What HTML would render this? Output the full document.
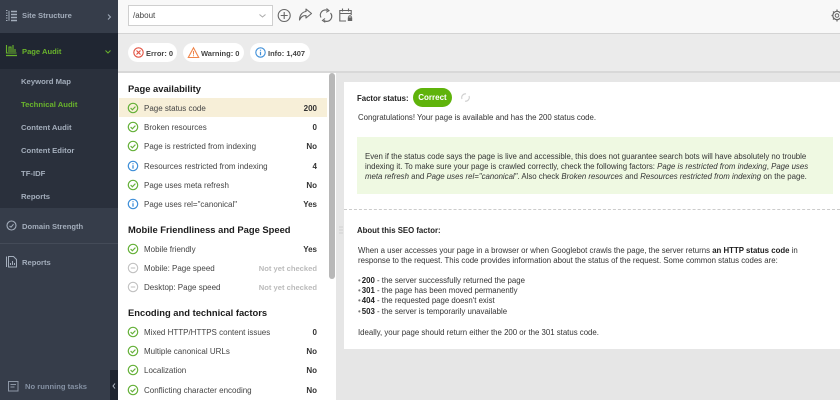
<!DOCTYPE html>
<html><head><meta charset="utf-8"><style>
html,body{margin:0;padding:0;width:840px;height:400px;overflow:hidden;background:#e6e6e6;font-family:"Liberation Sans",Arial,sans-serif}
.a{position:absolute;white-space:nowrap}
svg{position:absolute;overflow:visible}
.n{font-size:7.600px;font-weight:bold;color:#a3adbb;line-height:12px;margin-top:1px}
.s{font-size:7.700px;font-weight:bold;color:#a3adbb;left:21px;line-height:12px;margin-top:1px}
.h{font-size:9.400px;font-weight:bold;color:#1c1c1c;left:128px;line-height:12px}
.r{font-size:8px;color:#444;left:144px;line-height:12px;margin-top:1px}
.v{font-size:8px;font-weight:bold;color:#333;right:523px;line-height:12px;margin-top:1px}
.g{color:#bbb;font-size:7.600px}
.t{font-size:7.840px;color:#333;line-height:10.200px;left:358px}
.p{font-size:7.500px;font-weight:bold;color:#444;line-height:12px;top:48px}
</style></head><body>
<svg width="0" height="0" style="position:absolute"><defs>
<g id="ok"><circle cx="6" cy="6" r="4.700" fill="none" stroke="#66b13a" stroke-width="1.200"/><path d="M3.600 6l1.800 1.800 3-3.200" fill="none" stroke="#66b13a" stroke-width="1.200"/></g>
<g id="in"><circle cx="6" cy="6" r="4.700" fill="none" stroke="#3f8fd8" stroke-width="1.200"/><path d="M6 5.200v3.400M6 3.200v1.100" fill="none" stroke="#3f8fd8" stroke-width="1.300"/></g>
<g id="no"><circle cx="6" cy="6" r="4.700" fill="none" stroke="#c2c2c2" stroke-width="1.100"/><path d="M3.800 6h4.400" fill="none" stroke="#c2c2c2" stroke-width="1.100"/></g>
</defs></svg>

<!-- sidebar -->
<div class="a" style="left:0;top:0;width:118px;height:400px;background:#363d4a"></div>
<div class="a" style="left:0;top:33px;width:118px;height:36px;background:#202632"></div>
<div class="a" style="left:0;top:69px;width:118px;height:139px;background:#2a303c"></div>
<div class="a" style="left:0;top:243px;width:118px;height:1px;background:#444b58"></div>
<svg style="left:6px;top:10px" width="11" height="12"><path d="M0 .5h1.500M0 3h1.500M0 5.500h1.500M0 8h1.500M0 10.500h1.500" stroke="#a3adbb" stroke-width="1"/><path d="M3 .7v10" stroke="#a3adbb"/><path d="M5 1.500h6M5 4.500h6M5 7.500h6M5 10.500h6" stroke="#a3adbb" stroke-width="1.500"/></svg>
<div class="a n" style="left:22px;top:9px">Site Structure</div>
<svg style="left:107px;top:14px" width="5" height="6"><path d="M1 .5L3.500 3 1 5.500" fill="none" stroke="#a3adbb"/></svg>
<svg style="left:6px;top:45px" width="11" height="12"><path d="M.5 0v8h10M3 7V2h2v5M7 7V0M9 7V4" fill="none" stroke="#69b32c" stroke-width="1.100"/><path d="M0 10.500h11" stroke="#69b32c" stroke-width="1.300"/></svg>
<div class="a n" style="left:22px;top:45px;color:#69b32c">Page Audit</div>
<svg style="left:105px;top:50px" width="6" height="4"><path d="M.5 .5L3 3 5.500 .5" fill="none" stroke="#69b32c"/></svg>
<div class="a s" style="top:75px">Keyword Map</div>
<div class="a s" style="top:98px;color:#69b32c">Technical Audit</div>
<div class="a s" style="top:121px">Content Audit</div>
<div class="a s" style="top:144px">Content Editor</div>
<div class="a s" style="top:167px">TF-IDF</div>
<div class="a s" style="top:190px">Reports</div>
<svg style="left:6px;top:220px" width="11" height="11"><circle cx="5.500" cy="5.500" r="4.500" fill="none" stroke="#a3adbb" stroke-width="1.100"/><path d="M3.500 6l1.500 1.200 2.500-3" fill="none" stroke="#a3adbb"/></svg>
<div class="a n" style="left:22px;top:220px">Domain Strength</div>
<svg style="left:6px;top:256px" width="11" height="12"><path d="M.5 .5v10.500" stroke="#a3adbb"/><path d="M2.500 .5h5l3 3v7.500h-8z" fill="none" stroke="#a3adbb"/><path d="M4.500 9V7M6.500 9V5M8.500 9V7" stroke="#a3adbb"/></svg>
<div class="a n" style="left:22px;top:256px">Reports</div>
<svg style="left:8px;top:381px" width="11" height="11"><rect x=".5" y=".5" width="9.500" height="9.500" fill="none" stroke="#8d97a6"/><path d="M2.500 3.500h5.500M2.500 6h4" stroke="#8d97a6"/></svg>
<div class="a n" style="left:25px;top:380px;color:#8591a3">No running tasks</div>
<div class="a" style="left:110px;top:370px;width:8px;height:30px;background:#1f2530"></div>
<svg style="left:112px;top:383px" width="4" height="6"><path d="M3 .5L1 3l2 2.500" fill="none" stroke="#b5bcc7"/></svg>

<!-- top bar -->
<div class="a" style="left:118px;top:0;width:722px;height:33px;background:#f8f8f8;border-bottom:1px solid #d4d4d4"></div>
<div class="a" style="left:128px;top:5px;width:143px;height:19px;background:#fff;border:1px solid #cfcfcf"></div>
<div class="a" style="left:133px;top:10px;font-size:8px;color:#444;line-height:12px">/about</div>
<svg style="left:259px;top:14px" width="7" height="4"><path d="M.5 .5L3.500 3 6.500 .5" fill="none" stroke="#aaa"/></svg>
<svg style="left:277px;top:8px" width="15" height="15"><circle cx="7.200" cy="7.500" r="6" fill="none" stroke="#666" stroke-width="1.100"/><path d="M7.200 4v7M3.700 7.500h7" stroke="#666" stroke-width="1.100"/></svg>
<svg style="left:298px;top:8px" width="15" height="14"><path d="M8 1l5.500 4.500L8 10V7.500C4.500 7.500 3 9 1.500 12 1.500 7.500 4 4 8 3.500z" fill="none" stroke="#666" stroke-width="1.100" stroke-linejoin="round"/></svg>
<svg style="left:319px;top:8px" width="14" height="15"><path d="M2 9.500A5 5 0 0 1 8.500 2.500M11.500 5A5 5 0 0 1 5 12.500" fill="none" stroke="#666" stroke-width="1.200"/><path d="M7.500 .5l2.500 2.200-2.800 1.600M6 10.500l-2.500 2 2.800 1.800" fill="none" stroke="#666" stroke-width="1.100"/></svg>
<svg style="left:339px;top:8px" width="14" height="15"><path d="M7 13H.8V2.500h11.400V7" fill="none" stroke="#666" stroke-width="1.100"/><path d="M1 5.500h11M3.500 .5v3M9.500 .5v3" stroke="#666" stroke-width="1.100"/><rect x="8.800" y="9.500" width="4.400" height="3.500" fill="#666"/><circle cx="11" cy="9" r="1.300" fill="none" stroke="#666"/></svg>
<svg style="left:831px;top:9px" width="12" height="13"><circle cx="6" cy="6.500" r="1.800" fill="none" stroke="#666"/><circle cx="6" cy="6.500" r="4.200" fill="none" stroke="#666" stroke-width="1.200"/><path d="M6 .5v1.500M6 11v1.500M.5 6.500H2M10 6.500h1.500M2 2.500l1.200 1.200M8.800 9.300L10 10.500M2 10.500l1.200-1.200M8.800 3.700L10 2.500" stroke="#666" stroke-width="1.200"/></svg>

<!-- status bar -->
<div class="a" style="left:118px;top:34px;width:722px;height:37px;background:#ebebeb;border-bottom:2px solid #d8d8d8"></div>
<div class="a" style="left:128px;top:43px;width:49px;height:19px;border-radius:10px;background:#fff"></div>
<div class="a" style="left:183px;top:43px;width:61px;height:19px;border-radius:10px;background:#fff"></div>
<div class="a" style="left:250px;top:43px;width:60px;height:19px;border-radius:10px;background:#fff"></div>
<svg style="left:133px;top:47px" width="12" height="11"><circle cx="5.500" cy="5.500" r="4.700" fill="none" stroke="#e25241" stroke-width="1.100"/><path d="M3.500 3.500l4 4M7.500 3.500l-4 4" stroke="#e25241" stroke-width="1.200"/></svg>
<div class="a p" style="left:146px">Error: 0</div>
<svg style="left:188px;top:47px" width="12" height="11"><path d="M5.500 .8L10.700 10.500H.3z" fill="none" stroke="#f0854a" stroke-width="1.100"/><path d="M5.500 4v3.500M5.500 8.300v1" stroke="#f0854a"/></svg>
<div class="a p" style="left:201px">Warning: 0</div>
<svg style="left:255px;top:47px" width="12" height="11"><circle cx="5.500" cy="5.500" r="4.700" fill="none" stroke="#3f8fd8" stroke-width="1.100"/><path d="M5.500 4.700v3.500M5.500 2.700v1.100" stroke="#3f8fd8" stroke-width="1.200"/></svg>
<div class="a p" style="left:268px">Info: 1,407</div>

<!-- left panel -->
<div class="a" style="left:118px;top:73px;width:218px;height:327px;background:#fff"></div>
<div class="a" style="left:329px;top:73px;width:6px;height:206px;background:#b8b8b8;border-radius:3px"></div>
<div class="a" style="left:119px;top:98px;width:208px;height:19px;background:#f7efd8"></div>

<div class="a h" style="top:83px">Page availability</div>
<svg style="left:127px;top:102px" width="12" height="12"><use href="#ok"/></svg><div class="a r" style="top:102px">Page status code</div><div class="a v" style="top:102px">200</div>
<svg style="left:127px;top:121px" width="12" height="12"><use href="#ok"/></svg><div class="a r" style="top:121px">Broken resources</div><div class="a v" style="top:121px">0</div>
<svg style="left:127px;top:140px" width="12" height="12"><use href="#ok"/></svg><div class="a r" style="top:140px">Page is restricted from indexing</div><div class="a v" style="top:140px">No</div>
<svg style="left:127px;top:160px" width="12" height="12"><use href="#in"/></svg><div class="a r" style="top:160px">Resources restricted from indexing</div><div class="a v" style="top:160px">4</div>
<svg style="left:127px;top:179px" width="12" height="12"><use href="#ok"/></svg><div class="a r" style="top:179px">Page uses meta refresh</div><div class="a v" style="top:179px">No</div>
<svg style="left:127px;top:198px" width="12" height="12"><use href="#in"/></svg><div class="a r" style="top:198px">Page uses rel="canonical"</div><div class="a v" style="top:198px">Yes</div>

<div class="a h" style="top:224px">Mobile Friendliness and Page Speed</div>
<svg style="left:127px;top:243px" width="12" height="12"><use href="#ok"/></svg><div class="a r" style="top:243px">Mobile friendly</div><div class="a v" style="top:243px">Yes</div>
<svg style="left:127px;top:262px" width="12" height="12"><use href="#no"/></svg><div class="a r" style="top:262px">Mobile: Page speed</div><div class="a v g" style="top:262px">Not yet checked</div>
<svg style="left:127px;top:281px" width="12" height="12"><use href="#no"/></svg><div class="a r" style="top:281px">Desktop: Page speed</div><div class="a v g" style="top:281px">Not yet checked</div>

<div class="a h" style="top:307px">Encoding and technical factors</div>
<svg style="left:127px;top:326px" width="12" height="12"><use href="#ok"/></svg><div class="a r" style="top:326px">Mixed HTTP/HTTPS content issues</div><div class="a v" style="top:326px">0</div>
<svg style="left:127px;top:345px" width="12" height="12"><use href="#ok"/></svg><div class="a r" style="top:345px">Multiple canonical URLs</div><div class="a v" style="top:345px">No</div>
<svg style="left:127px;top:364px" width="12" height="12"><use href="#ok"/></svg><div class="a r" style="top:364px">Localization</div><div class="a v" style="top:364px">No</div>
<svg style="left:127px;top:384px" width="12" height="12"><use href="#ok"/></svg><div class="a r" style="top:384px">Conflicting character encoding</div><div class="a v" style="top:384px">No</div>

<!-- splitter -->
<svg style="left:339px;top:226px" width="4" height="10"><path d="M.5 1h3M.5 4h3M.5 7h3" stroke="#bbb" stroke-dasharray="1 1"/></svg>

<!-- right panel -->
<div class="a" style="left:344px;top:82px;width:496px;height:267px;background:#fff"></div>
<div class="a" style="left:357px;top:93px;font-size:7.800px;font-weight:bold;color:#222;line-height:12px">Factor status:</div>
<div class="a" style="left:413px;top:88px;width:39px;height:19px;border-radius:10px;background:#5fb30b;color:#fff;font-size:8px;font-weight:bold;line-height:19px;text-align:center">Correct</div>
<svg style="left:461px;top:93px" width="9" height="9"><path d="M1 6A3.800 3.800 0 0 1 5 .8M8 3A3.800 3.800 0 0 1 4 8.200" fill="none" stroke="#cfcfcf" stroke-width="1.100"/></svg>
<div class="a t" style="top:113px">Congratulations! Your page is available and has the 200 status code.</div>

<div class="a" style="left:357px;top:137px;width:476px;height:57px;background:#eff9e2"></div>
<div class="a t" style="left:365px;top:152px">Even if the status code says the page is live and accessible, this does not guarantee search bots will have absolutely no trouble<br>indexing it. To make sure your page is crawled correctly, check the following factors: <i>Page is restricted from indexing</i>, <i>Page uses</i><br><i>meta refresh</i> and <i>Page uses rel="canonical"</i>. Also check <i>Broken resources</i> and <i>Resources restricted from indexing</i> on the page.</div>

<div class="a" style="left:344px;top:209px;width:496px;border-top:1px dashed #ccc"></div>
<div class="a t" style="left:357px;top:226px;color:#222;font-weight:bold;font-size:7.800px">About this SEO factor:</div>
<div class="a t" style="left:358px;top:246px">When a user accesses your page in a browser or when Googlebot crawls the page, the server returns <b style="color:#222">an HTTP status code</b> in<br>response to the request. This code provides information about the status of the request. Some common status codes are:</div>
<div class="a t" style="left:358px;top:276px"><span style="color:#777">•</span><b style="color:#222;margin-left:1px">200</b> - the server successfully returned the page<br><span style="color:#777">•</span><b style="color:#222;margin-left:1px">301</b> - the page has been moved permanently<br><span style="color:#777">•</span><b style="color:#222;margin-left:1px">404</b> - the requested page doesn't exist<br><span style="color:#777">•</span><b style="color:#222;margin-left:1px">503</b> - the server is temporarily unavailable</div>
<div class="a t" style="left:358px;top:328px">Ideally, your page should return either the 200 or the 301 status code.</div>
</body></html>
